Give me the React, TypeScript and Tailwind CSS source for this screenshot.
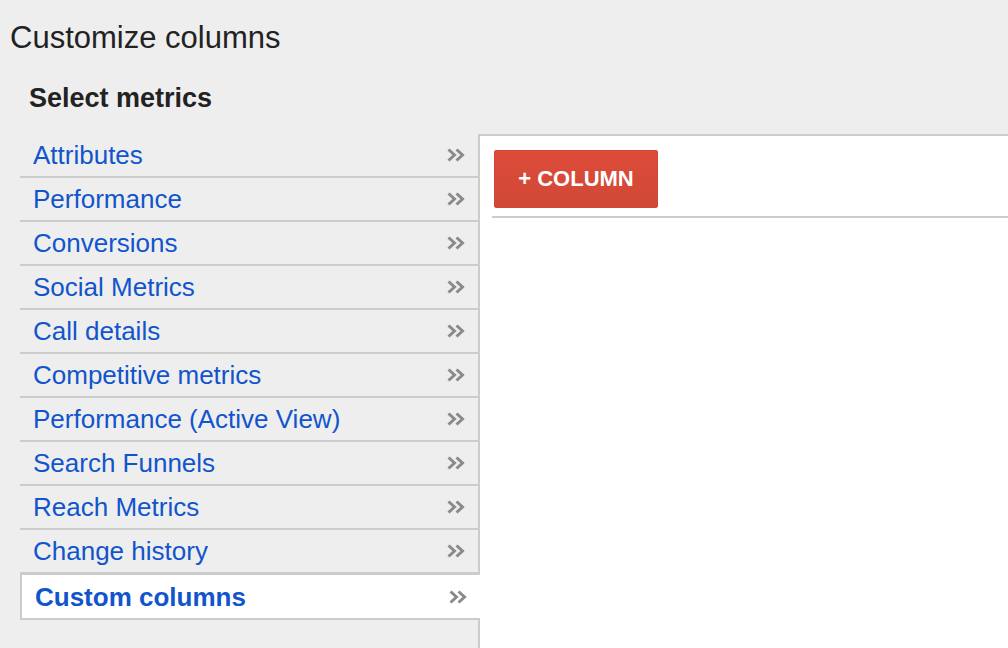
import React from "react";

const items = [
  "Attributes",
  "Performance",
  "Conversions",
  "Social Metrics",
  "Call details",
  "Competitive metrics",
  "Performance (Active View)",
  "Search Funnels",
  "Reach Metrics",
  "Change history",
];

function Chevrons() {
  return (
    <svg width="18" height="14" viewBox="0 0 18 14" className="shrink-0">
      <path d="M1.5 1.5 L7.5 7 L1.5 12.5" fill="none" stroke="#8a8a8a" strokeWidth="3" />
      <path d="M9.5 1.5 L15.5 7 L9.5 12.5" fill="none" stroke="#8a8a8a" strokeWidth="3" />
    </svg>
  );
}

export default function App() {
  return (
    <div
      className="w-[1008px] h-[648px] overflow-hidden bg-[#eeeeee] text-[#222222] flex flex-col"
      style={{ fontFamily: '"Liberation Sans", Arial, sans-serif' }}
    >
      <div className="pl-[10px] pt-[20px] text-[31px] leading-[36px]">Customize columns</div>
      <div className="pl-[29px] pt-[26px] text-[27px] leading-[32px] font-bold">Select metrics</div>
      <div className="flex flex-1 mt-[20px]">
        <div className="ml-[20px] w-[458px] flex flex-col shrink-0">
          {items.map((it) => (
            <div
              key={it}
              className="h-[44px] border-b-2 border-[#cccccc] flex items-center justify-between pl-[13px] pr-[13px]"
            >
              <span className="text-[26px] leading-[42px] text-[#1155cc]">{it}</span>
              <Chevrons />
            </div>
          ))}
          <div className="relative z-10 w-[460px] h-[46px] bg-white border-t border-b-2 border-l-2 border-[#cccccc] flex items-center justify-between pl-[13px] pr-[13px]">
            <span className="text-[26px] leading-[42px] font-bold text-[#1155cc]">Custom columns</span>
            <Chevrons />
          </div>
        </div>
        <div className="flex-1 bg-white border-l-2 border-t-2 border-[#cccccc]">
          <div className="ml-[12px] pl-[2px] pt-[14px] pb-[8px] border-b-2 border-[#cccccc]">
            <button className="w-[164px] h-[58px] rounded-[2px] border border-[#d14836] bg-gradient-to-b from-[#dd4b39] to-[#d14836] text-white font-bold text-[22px] leading-none flex items-center justify-center">
              + COLUMN
            </button>
          </div>
        </div>
      </div>
    </div>
  );
}
